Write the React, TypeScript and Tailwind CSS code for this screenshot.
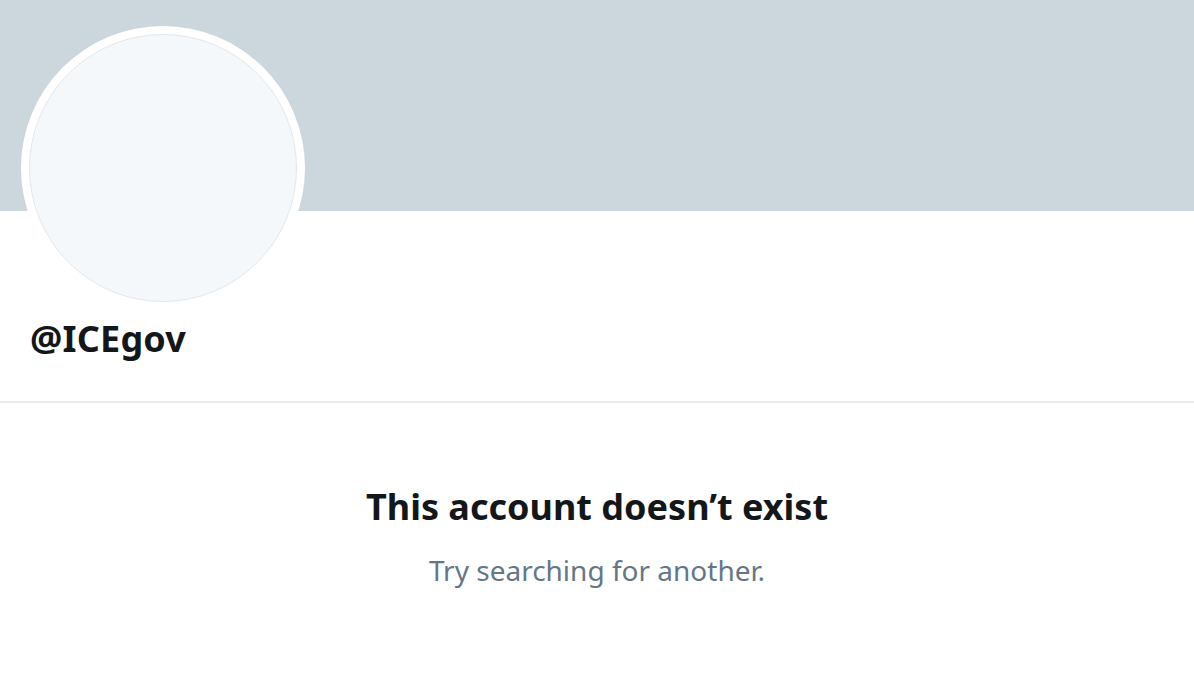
export default function App() {
  return (
    <div className="min-h-screen bg-white font-['Noto_Sans','Open_Sans',sans-serif]">
      {/* Banner */}
      <div className="h-[211px] bg-[#ccd6dd]" />

      {/* Profile header */}
      <div className="px-[21px]">
        <div className="-mt-[185px] w-[284px] h-[284px] rounded-full bg-white p-[8px]">
          <div className="w-full h-full rounded-full bg-[#f5f8fa] border border-[#e1e8ed]" />
        </div>
        <div className="pl-[9px] pt-[9px] h-[91px]">
          <h2 className="text-[36px] leading-[40px] font-bold text-[#14171a] tracking-[0.2px]">@ICEgov</h2>
        </div>
      </div>
      <div className="h-[2px] bg-[#e6ecf0]" />

      {/* Empty state */}
      <div className="flex flex-col items-center pt-[81px]">
        <h1 className="text-[36px] leading-[46px] font-bold text-[#14171a]">
          This account doesn’t exist
        </h1>
        <p className="mt-[21px] text-[28px] leading-[38px] text-[#657786]">Try searching for another.</p>
      </div>
    </div>
  )
}
